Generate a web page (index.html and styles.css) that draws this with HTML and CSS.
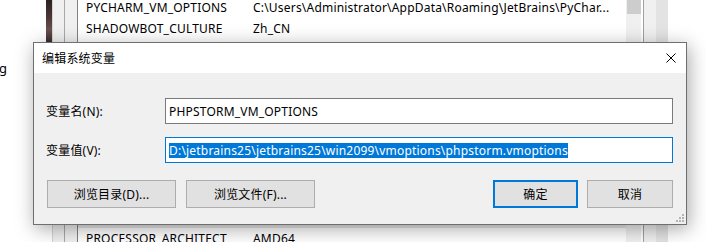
FILE: index.html
```html
<!DOCTYPE html>
<html lang="zh-CN">
<head>
    <meta charset="UTF-8" />
    <title>编辑系统变量</title>
    <link rel="stylesheet" href="styles.css">
</head>
<body>
    <div class="desk">
        <div class="left"><p class="cut">g</p></div>
        <div class="photo"></div>
        <div class="frame"></div>
        <div class="frame inner"></div>
        <div class="list">
            <div class="row"><span class="name">PYCHARM_VM_OPTIONS</span><span>C:\Users\Administrator\AppData\Roaming\JetBrains\PyChar...</span></div>
            <div class="row"><span class="name">SHADOWBOT_CULTURE</span><span>Zh_CN</span></div>
            <!-- rows under the dialog are left blank -->
            <div class="row"></div>
            <div class="row"></div>
            <div class="row"></div>
            <div class="row"></div>
            <div class="row"></div>
            <div class="row"></div>
            <div class="row"></div>
            <div class="row"></div>
            <div class="row picked"></div>
            <div class="row"><span class="name">PROCESSOR_ARCHITECT</span><span>AMD64</span></div>
        </div>
        <div class="scroll"><div class="thumb"></div></div>
        <div class="side"></div>
    </div>

    <div class="dialog">
        <div class="titlebar">
            <span>编辑系统变量</span>
            <svg class="close" width="10" height="10" viewBox="0 0 10 10">
                <path d="M0.5 0.5 L9.5 9.5 M9.5 0.5 L0.5 9.5" stroke="#000" stroke-width="1" fill="none"/>
            </svg>
        </div>
        <div class="body">
            <div class="fields">
                <label>变量名(N):</label>
                <div class="field"><span>PHPSTORM_VM_OPTIONS</span></div>
                <label>变量值(V):</label>
                <div class="field focus"><span class="sel">D:\jetbrains25\jetbrains25\win2099\vmoptions\phpstorm.vmoptions</span></div>
            </div>
            <div class="buttons">
                <button class="wide">浏览目录(D)...</button>
                <button class="wide">浏览文件(F)...</button>
                <button class="ok">确定</button>
                <button class="cancel">取消</button>
            </div>
        </div>
        <svg class="grip" width="9" height="9" viewBox="0 0 9 9" fill="#b4b4b4">
            <rect x="7" y="1" width="2" height="2"/>
            <rect x="4" y="4" width="2" height="2"/>
            <rect x="7" y="4" width="2" height="2"/>
            <rect x="1" y="7" width="2" height="2"/>
            <rect x="4" y="7" width="2" height="2"/>
            <rect x="7" y="7" width="2" height="2"/>
        </svg>
    </div>
</body>
</html>
```

FILE: styles.css
```css
body {
    margin: 0;
    width: 706px;
    height: 242px;
    overflow: hidden;
    position: relative;
    background: #fff;
    color: #000;
    font-family: "Noto Sans", "Noto Sans CJK SC", sans-serif;
    font-size: 12px;
    letter-spacing: 0.2px;
}

.desk {
    display: flex;
    height: 242px;
}

.left {
    width: 46px;
}

.cut {
    margin: 59px 0 0 -1px;
    font-size: 13px;
}

.photo {
    width: 6px;
    height: 42px;
    background: linear-gradient(180deg, #2b2222 0%, #4a3636 40%, #6b5050 70%, #3b2d2d 100%);
}

.frame {
    width: 11px;
    background: #f0f0f0;
    border-left: 1px solid #d4d4d4;
}

.frame.inner {
    width: 12px;
    border-left: 1px solid #a8a8a8;
    border-right: 1px solid #828282;
}

.list {
    width: 548px;
    margin-top: -3px;
    background: #fff;
}

.row {
    display: flex;
    align-items: center;
    height: 21px;
    padding-left: 8px;
    white-space: nowrap;
}

.row.picked {
    background: #e6e6e6;
}

.name {
    width: 167px;
    flex-shrink: 0;
}

.scroll {
    width: 15px;
    background: #f0f0f0;
    border-right: 2px solid #fff;
}

.thumb {
    margin-left: 1px;
    width: 14px;
    height: 14px;
    background: #cdcdcd;
}

.side {
    width: 24px;
    background: linear-gradient(90deg, #f0f0f0 0, #f0f0f0 12px, #e3e3e3 12px, #e3e3e3 100%);
    border-left: 1px solid #a0a0a0;
}

.dialog {
    position: absolute;
    left: 33px;
    top: 42px;
    width: 652px;
    height: 181px;
    border: 1px solid #6f6f6f;
    background: #f0f0f0;
    box-shadow: 2px 4px 18px rgba(0, 0, 0, 0.35);
}

.titlebar {
    height: 30px;
    background: #fff;
    display: flex;
    align-items: center;
    justify-content: space-between;
    padding: 0 10px 0 8px;
}

.body {
    padding: 25px 13px 16px 12px;
}

.fields {
    display: grid;
    grid-template-columns: 119px 1fr;
    row-gap: 13px;
    align-items: center;
}

.field {
    height: 26px;
    box-sizing: border-box;
    border: 1px solid #7a7a7a;
    background: #fff;
    padding: 0 3px;
    display: flex;
    align-items: center;
    white-space: nowrap;
}

.field.focus {
    border-color: #0078d7;
}

.sel {
    background: #0078d7;
    color: #fff;
    line-height: 15px;
}

.buttons {
    display: flex;
    gap: 10px;
    margin-top: 17px;
    padding-left: 1px;
}

button {
    height: 28px;
    box-sizing: border-box;
    border: 1px solid #adadad;
    background: #e1e1e1;
    font-family: inherit;
    font-size: 12px;
    letter-spacing: 0.2px;
    color: #000;
    padding: 0;
}

button.wide {
    width: 129px;
}

button.ok {
    width: 85px;
    margin-left: auto;
    border: 2px solid #0078d7;
}

button.cancel {
    width: 86px;
    margin-left: -1px;
}

.grip {
    position: absolute;
    right: 2px;
    bottom: 2px;
}
```
